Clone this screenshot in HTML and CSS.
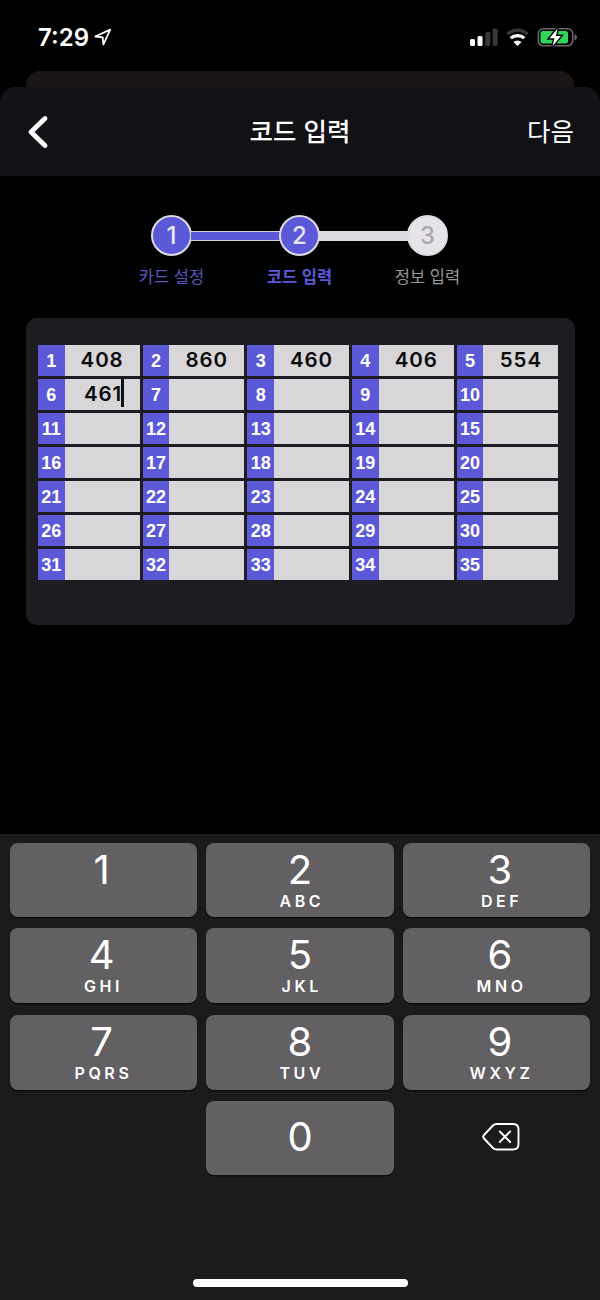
FILE: index.html
```html
<!DOCTYPE html>
<html lang="ko">
<head>
<meta charset="utf-8">
<title>코드 입력</title>
<link rel="stylesheet" href="styles.css">
</head>
<body>
<div class="screen">
  <div class="status">
    <span class="time">7:29</span>
    <svg class="loc" width="18" height="18" viewBox="0 0 18 18"><path d="M16.200 1.600 L1.300 8.500 L8.700 9.300 L9.400 16.500 Z" fill="none" stroke="#fff" stroke-width="1.800" stroke-linejoin="round"/></svg>
    <svg class="indicators" width="110" height="22" viewBox="0 0 110 22">
      <rect x="1" y="12" width="5" height="7" rx="1.5" fill="#fff"/>
      <rect x="8.5" y="9" width="5" height="10" rx="1.5" fill="#fff"/>
      <rect x="16.3" y="5" width="5" height="14" rx="1.5" fill="#38373b"/>
      <rect x="23.7" y="1.5" width="5" height="17.5" rx="1.5" fill="#38373b"/>
      <path d="M38.4 7.2 A14.5 14.5 0 0 1 58.6 7.2" fill="none" stroke="#38373b" stroke-width="3.2"/>
      <path d="M41.7 11.2 A10 10 0 0 1 55.3 11.2" fill="none" stroke="#fff" stroke-width="3.2"/>
      <path d="M44.5 15 A6 6 0 0 1 52.5 15 L48.5 19 Z" fill="#fff"/>
      <rect x="69.3" y="1.8" width="34.4" height="17" rx="5" fill="none" stroke="#69686b" stroke-width="1.6"/>
      <path d="M105.5 7 Q108 8 108 10.2 Q108 12.500 105.5 13.500 Z" fill="#69686b"/>
      <rect x="71.500" y="4" width="27.500" height="12.600" rx="2.500" fill="#32d45c"/>
      <path d="M88.500 1.500 L80.500 11.300 H85.500 L83.500 19.200 L92 9 H87 Z" fill="#fff" stroke="#000" stroke-width="2.800" paint-order="stroke"/>
    </svg>
  </div>
  <div class="backcard"></div>
  <header class="nav">
    <svg class="back" width="24" height="36" viewBox="0 0 24 36"><path d="M19 4.500 L5 18 L19 31.500" fill="none" stroke="#fff" stroke-width="4.800" stroke-linecap="round" stroke-linejoin="round"/></svg>
    <h1 class="title">코드 입력</h1>
    <span class="next">다음</span>
  </header>
  <main class="content">
    <div class="steps">
      <div class="step done"><span class="dot">1</span><span class="label">카드 설정</span></div>
      <div class="bar filled"></div>
      <div class="step current"><span class="dot">2</span><span class="label">코드 입력</span></div>
      <div class="bar"></div>
      <div class="step"><span class="dot">3</span><span class="label">정보 입력</span></div>
    </div>
    <section class="panel">
      <div class="grid">
        <div class="cell"><b>1</b><span>408</span></div><div class="cell"><b>2</b><span>860</span></div><div class="cell"><b>3</b><span>460</span></div><div class="cell"><b>4</b><span>406</span></div><div class="cell"><b>5</b><span>554</span></div>
        <div class="cell active"><b>6</b><span>461<i class="caret"></i></span></div><div class="cell"><b>7</b></div><div class="cell"><b>8</b></div><div class="cell"><b>9</b></div><div class="cell"><b>10</b></div>
        <div class="cell"><b>11</b></div><div class="cell"><b>12</b></div><div class="cell"><b>13</b></div><div class="cell"><b>14</b></div><div class="cell"><b>15</b></div>
        <div class="cell"><b>16</b></div><div class="cell"><b>17</b></div><div class="cell"><b>18</b></div><div class="cell"><b>19</b></div><div class="cell"><b>20</b></div>
        <div class="cell"><b>21</b></div><div class="cell"><b>22</b></div><div class="cell"><b>23</b></div><div class="cell"><b>24</b></div><div class="cell"><b>25</b></div>
        <div class="cell"><b>26</b></div><div class="cell"><b>27</b></div><div class="cell"><b>28</b></div><div class="cell"><b>29</b></div><div class="cell"><b>30</b></div>
        <div class="cell"><b>31</b></div><div class="cell"><b>32</b></div><div class="cell"><b>33</b></div><div class="cell"><b>34</b></div><div class="cell"><b>35</b></div>
      </div>
    </section>
  </main>
  <div class="keyboard">
    <div class="keys">
      <div class="key left"><span class="digit">1</span></div>
      <div class="key"><span class="digit">2</span><span class="letters">ABC</span></div>
      <div class="key right"><span class="digit">3</span><span class="letters">DEF</span></div>
      <div class="key left"><span class="digit">4</span><span class="letters">GHI</span></div>
      <div class="key"><span class="digit">5</span><span class="letters">JKL</span></div>
      <div class="key right"><span class="digit">6</span><span class="letters">MNO</span></div>
      <div class="key left"><span class="digit">7</span><span class="letters">PQRS</span></div>
      <div class="key"><span class="digit">8</span><span class="letters">TUV</span></div>
      <div class="key right"><span class="digit">9</span><span class="letters">WXYZ</span></div>
      <div class="blank"></div>
      <div class="key zero"><span class="digit">0</span></div>
      <div class="delete">
        <svg width="40" height="30" viewBox="0 0 40 30"><path d="M15.500 2 H32 Q37.500 2 37.500 7.500 V22 Q37.500 27.500 32 27.500 H15.500 Q13.500 27.500 12 26 L3 16.500 Q1.500 14.750 3 13 L12 3.500 Q13.500 2 15.500 2 Z M18.800 9.500 L29.200 20 M29.200 9.500 L18.800 20" fill="none" stroke="#fff" stroke-width="1.900" stroke-linecap="round" stroke-linejoin="round"/></svg>
      </div>
    </div>
    <div class="home"></div>
  </div>
</div>
</body>
</html>
```

FILE: styles.css
```css
* { box-sizing: border-box; }
body { margin: 0; background: #000; }
.screen {
  width: 600px;
  height: 1300px;
  background: #000;
  color: #fff;
  font-family: Inter, "Noto Sans CJK KR", sans-serif;
  display: flex;
  flex-direction: column;
  overflow: hidden;
}
.status { height: 70.5px; padding: 27px 21px 0 38px; display: flex; align-items: flex-start; }
.time { font-size: 24px; line-height: 22px; font-weight: 600; }
.loc { margin: 1px 0 0 5px; }
.indicators { margin-left: auto; }
.backcard { height: 30px; margin: 0 26px -13.5px; border-radius: 14px 14px 0 0; background: #1a1518; flex: none; }
.nav {
  height: 89px;
  flex: none;
  position: relative;
  border-radius: 15px 15px 0 0;
  background: #121115;
  display: grid;
  grid-template-columns: 1fr auto 1fr;
  align-items: center;
  padding: 0 26px 0 26px;
  font-family: "Noto Sans CJK KR", sans-serif;
}
.title { margin: 0; font-size: 25.5px; font-weight: 500; line-height: 36px; padding-bottom: 4px; }
.next { justify-self: end; font-size: 25.5px; font-weight: 400; line-height: 36px; padding-bottom: 4px; }
.content { height: 658px; flex: none; padding: 39px 25.5px 0; }
.steps { display: flex; justify-content: center; height: 102.5px; margin-right: 1px; }
.step { width: 41px; display: flex; flex-direction: column; align-items: center; }
.dot {
  width: 41px;
  height: 41px;
  flex: none;
  border: 2px solid #dedce2;
  border-radius: 50%;
  background: #e6e4e8;
  color: #aaa9ac;
  font-size: 24px;
  font-weight: 500;
  line-height: 37px;
  text-align: center;
}
.done .dot, .current .dot { background: #5c59d9; color: #e9e7f5; }
.label {
  margin-top: 8px;
  white-space: nowrap;
  font-family: "Noto Sans CJK KR", sans-serif;
  font-size: 16.500px;
  line-height: 24px;
  color: #98979a;
}
.done .label { color: #5a56bd; }
.current .label { color: #5c59d9; font-weight: 700; }
.bar { width: 89px; height: 10px; margin: 15.500px -1px 0; background: #dedce0; }
.bar.filled { background: #5c59d9; border: solid #d2d0de; border-width: 1.500px 0; }
.panel { height: 307px; padding: 27px 16px 0 12.500px; border-radius: 11px; background: #1e1c20; }
.grid { display: grid; grid-template-columns: repeat(5, 1fr); grid-auto-rows: 31px; gap: 3px; }
.cell { display: grid; grid-template-columns: 26.500px 1fr; background: #d8d6d9; }
.cell b {
  background: #5c59d9;
  text-align: center;
  font: bold 18px/32px "Liberation Sans", Arial, sans-serif;
  height: 31px;
}
.cell span {
  justify-self: center;
  position: relative;
  color: #0b0b0d;
  font-size: 20.500px;
  font-weight: 600;
  line-height: 30px;
  letter-spacing: 0.900px;
}
.cell.active span { left: 1px; }
.caret { position: absolute; right: -2px; top: 0; width: 3px; height: 28px; background: #111; }
.keyboard { height: 466px; flex: none; padding: 9.400px 9.500px 0; background: #1c1a1d; }
.keys { display: grid; grid-template-columns: repeat(3, 1fr); grid-template-rows: 73.500px 75px 75px 73.500px; gap: 11.500px 9.500px; }
.key {
  display: flex;
  flex-direction: column;
  align-items: center;
  padding-top: 10px;
  border-radius: 8px;
  background: #626063;
  box-shadow: 0 1.500px 0 #0c0b0d;
}
.left { padding-right: 3px; }
.right { padding-left: 6px; }
.digit { font-size: 40px; font-weight: 400; line-height: 34px; }
.letters { margin-top: 6px; font-size: 16px; font-weight: 600; line-height: 16px; letter-spacing: 3.600px; margin-right: -3.600px; }
.zero { padding-top: 19px; }
.delete { display: grid; place-items: center; padding: 0 0 3px 8px; }
.home { width: 215px; height: 8px; margin: 104.600px auto 0; border-radius: 4px; background: #fff; }
```
